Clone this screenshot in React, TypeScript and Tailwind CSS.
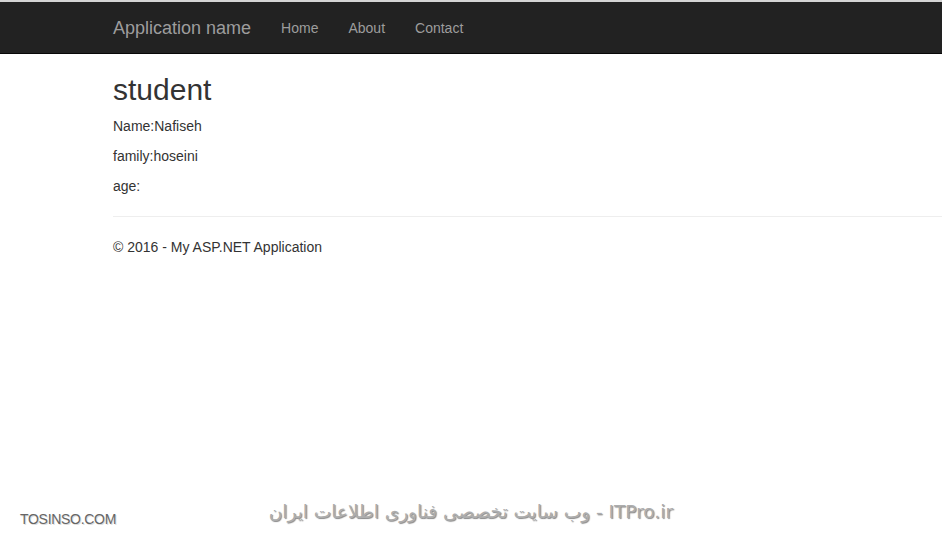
export default function App() {
  return (
    <div
      className="relative h-[540px] w-[942px] overflow-hidden bg-white text-[14px] leading-[20px] text-[#333]"
      style={{ fontFamily: '"Liberation Sans", Arial, sans-serif' }}
    >
      {/* Top browser edge + navbar */}
      <div className="h-[2px] bg-[#d4d4d4]" />
      <nav className="flex h-[52px] items-center border-b border-[#080808] bg-[#222] pl-[113px]">
        <span className="text-[18px] leading-[20px] text-[#9d9d9d]">Application name</span>
        <ul className="ml-[15px] flex">
          <li className="px-[15px] text-[#9d9d9d]">Home</li>
          <li className="px-[15px] text-[#9d9d9d]">About</li>
          <li className="px-[15px] text-[#9d9d9d]">Contact</li>
        </ul>
      </nav>

      {/* Body content */}
      <main className="pl-[113px]">
        <h2 className="mt-[19px] mb-[10px] text-[30px] leading-[33px] font-medium text-[#333]">
          student
        </h2>
        <p className="mb-[10px]">Name:Nafiseh</p>
        <p className="mb-[10px]">family:hoseini</p>
        <p className="mb-[10px]">age:</p>
        <hr className="mt-[20px] mb-[20px] border-t border-[#eee]" />
        <footer>
          <p>© 2016 - My ASP.NET Application</p>
        </footer>
      </main>

      {/* Watermarks */}
      <div
        className="absolute left-[20px] top-[511px] text-[14px] leading-[16px] tracking-[-0.3px] text-[#666]"
        style={{ textShadow: "1px 1px 0 #ddd" }}
      >
        TOSINSO.COM
      </div>
      <div
        dir="rtl"
        className="absolute right-[269px] top-[501px] text-[18.5px] leading-[22px] font-normal text-[#adadad]"
        style={{
          fontFamily: '"DejaVu Sans", "Noto Sans", sans-serif',
          textShadow: "1px 1px 1px #888",
        }}
      >
        ITPro.ir - وب سایت تخصصی فناوری اطلاعات ایران
      </div>
    </div>
  );
}
